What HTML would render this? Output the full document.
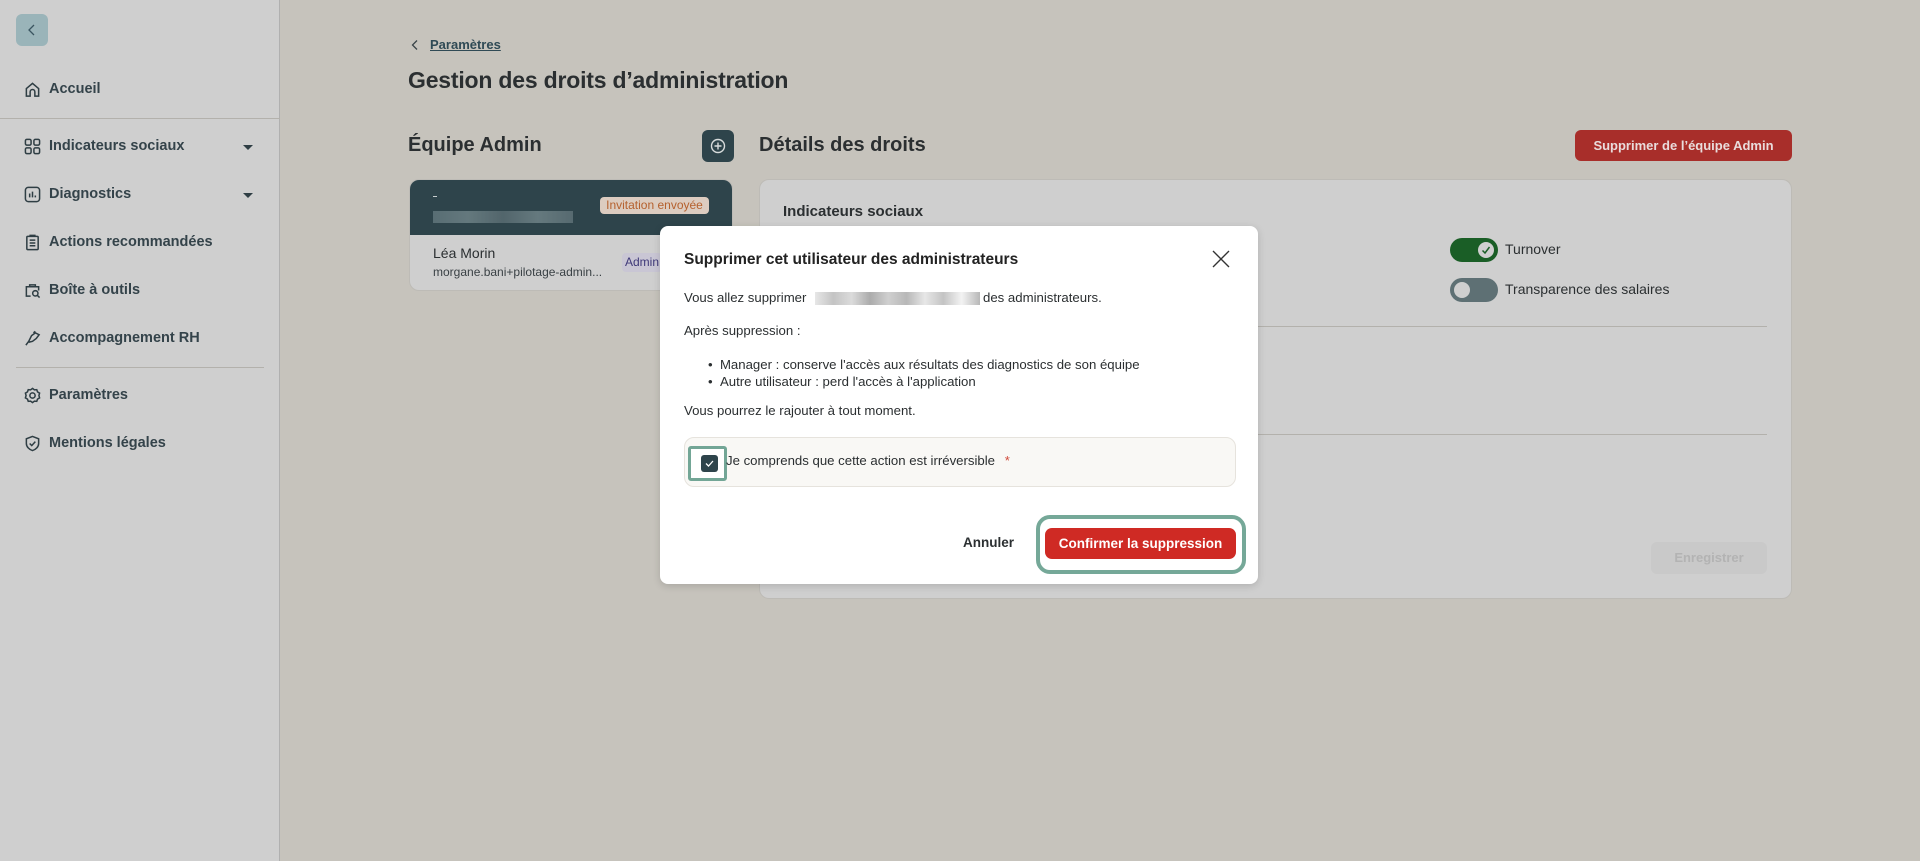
<!DOCTYPE html>
<html><head><meta charset="utf-8"><style>
*{box-sizing:border-box;margin:0;padding:0}
body{width:1920px;height:861px;overflow:hidden;background:#c6c3bc;font-family:"Liberation Sans",sans-serif;color:#2b2f31;position:relative}
.abs{position:absolute}
.sb{left:0;top:0;width:280px;height:861px;background:#cfcfcf;border-right:1px solid #b0b0b0}
.nav{position:absolute;left:24px;display:flex;align-items:center;font-size:14.5px;font-weight:bold;color:#34434a;height:20px}
.nav svg{width:17px;height:17px;margin-right:8px;fill:none;stroke:#2f3e44;stroke-width:1.6}
.caret{position:absolute;left:243px;width:0;height:0;border-left:5px solid transparent;border-right:5px solid transparent;border-top:5px solid #2f3e44}
.hr{position:absolute;height:1px;background:#b3b1ac}
.tg{position:absolute;width:48px;height:24px;border-radius:12px}
.knob{position:absolute;top:4px;width:16px;height:16px;border-radius:50%;background:#cfcfcf}
.mt{font-size:13.2px;color:#2b2f31}
</style></head><body>
<div class="abs sb"></div>
<div class="abs" style="left:16px;top:14px;width:32px;height:32px;border-radius:6px;background:#9ab4b9"></div>
<svg class="abs" style="left:26px;top:23px" width="12" height="14" viewBox="0 0 12 14"><path d="M8 2 L3 7 L8 12" fill="none" stroke="#3a5560" stroke-width="1.3"/></svg>
<div class="nav" style="top:79px"><svg viewBox="0 0 18 18"><path d="M2.5 16V8L9 2.5 15.5 8V16H11.5V11.5A2.5 2.5 0 0 0 6.5 11.5V16Z"/></svg>Accueil</div>
<div class="hr" style="left:0;top:118px;width:280px"></div>
<div class="nav" style="top:136px"><svg viewBox="0 0 18 18"><rect x="1.5" y="1.5" width="6" height="6" rx="1.5"/><rect x="10.5" y="1.5" width="6" height="6" rx="1.5"/><rect x="1.5" y="10.5" width="6" height="6" rx="1.5"/><rect x="10.5" y="10.5" width="6" height="6" rx="1.5"/></svg>Indicateurs sociaux</div>
<div class="caret" style="top:145px"></div>
<div class="nav" style="top:184px"><svg viewBox="0 0 18 18"><rect x="1.5" y="1.5" width="15" height="15" rx="3"/><path d="M6 12V8M9 12V6M12 12V10"/></svg>Diagnostics</div>
<div class="caret" style="top:193px"></div>
<div class="nav" style="top:232px"><svg viewBox="0 0 18 18"><rect x="3" y="2.5" width="12" height="14" rx="1"/><path d="M6.5 2.5V1.5H11.5V2.5M6 6.5H12M6 9.5H12M6 12.5H12"/></svg>Actions recommandées</div>
<div class="nav" style="top:280px"><svg viewBox="0 0 18 18"><path d="M7 15H2.5V5H15.5V9M6 5V3H12V5"/><circle cx="12" cy="12" r="2.8"/><path d="M14 14L16.5 16.5"/></svg>Boîte à outils</div>
<div class="nav" style="top:328px"><svg viewBox="0 0 18 18"><path d="M2 16L5 12 8 6 12 3 16 5 13 9 9 12 5 13M10 3L12 1.5"/></svg>Accompagnement RH</div>
<div class="hr" style="left:16px;top:367px;width:248px"></div>
<div class="nav" style="top:385px"><svg viewBox="0 0 18 18"><circle cx="9" cy="9" r="2.8"/><path d="M9 1.5L11 3 13.5 2.8 14.3 5.2 16.5 6.5 15.8 9 16.5 11.5 14.3 12.8 13.5 15.2 11 15 9 16.5 7 15 4.5 15.2 3.7 12.8 1.5 11.5 2.2 9 1.5 6.5 3.7 5.2 4.5 2.8 7 3Z"/></svg>Paramètres</div>
<div class="nav" style="top:433px"><svg viewBox="0 0 18 18"><path d="M9 1.5L15.5 4V9C15.5 12.5 12.5 15.5 9 16.5 5.5 15.5 2.5 12.5 2.5 9V4Z"/><path d="M6 9L8.2 11.2 12 7"/></svg>Mentions légales</div>

<!-- main -->
<svg class="abs" style="left:410px;top:39px" width="10" height="12" viewBox="0 0 10 12"><path d="M7 1.5L2.5 6 7 10.5" fill="none" stroke="#3a4448" stroke-width="1.3"/></svg>
<div class="abs" style="left:430px;top:37px;font-size:13px;font-weight:bold;color:#2f4a55;text-decoration:underline">Paramètres</div>
<div class="abs" style="left:408px;top:67px;font-size:23px;font-weight:bold;color:#2b2f31;letter-spacing:-0.2px">Gestion des droits d’administration</div>
<div class="abs" style="left:408px;top:134px;font-size:20px;font-weight:bold">Équipe Admin</div>
<div class="abs" style="left:702px;top:130px;width:32px;height:32px;border-radius:6px;background:#2e444b"></div>
<svg class="abs" style="left:708px;top:136px" width="20" height="20" viewBox="0 0 20 20"><circle cx="10" cy="10" r="6.5" fill="none" stroke="#d8dcdc" stroke-width="1.4"/><path d="M10 6.5V13.5M6.5 10H13.5" stroke="#d8dcdc" stroke-width="1.4"/></svg>
<div class="abs" style="left:409px;top:179px;width:324px;height:112px;border-radius:10px;background:#cfcfcf;border:1px solid #bdbbb6;overflow:hidden">
 <div style="height:55px;background:#2e444b"></div>
</div>
<div class="abs" style="left:433px;top:196px;width:4px;height:1px;background:#c8cfd0"></div>
<div class="abs" style="left:433px;top:211px;width:140px;height:12px;background:linear-gradient(90deg,#5d7278,#6a7e83,#56696f,#6b7f84,#5b6e74);opacity:.9"></div>
<div class="abs" style="left:600px;top:197px;width:109px;height:17px;border-radius:4px;background:#dcccc0;color:#b5612e;font-size:12px;line-height:17px;text-align:center">Invitation envoyée</div>
<div class="abs" style="left:433px;top:245px;font-size:14px;color:#2b2f31">Léa Morin</div>
<div class="abs" style="left:433px;top:265px;font-size:12px;color:#3a4145">morgane.bani+pilotage-admin...</div>
<div class="abs" style="left:622px;top:253px;width:40px;height:19px;border-radius:4px;background:#c9c6d4;color:#3e3878;font-size:12px;line-height:19px;padding-left:3px">Admin</div>

<div class="abs" style="left:759px;top:134px;font-size:20px;font-weight:bold">Détails des droits</div>
<div class="abs" style="left:1575px;top:130px;width:217px;height:31px;border-radius:6px;background:#a82e2a;color:#e9dcdc;font-size:13px;font-weight:bold;line-height:31px;text-align:center">Supprimer de l’équipe Admin</div>
<div class="abs" style="left:759px;top:179px;width:1033px;height:420px;border-radius:10px;background:#cfcfcf;border:1px solid #bdbbb6"></div>
<div class="abs" style="left:783px;top:203px;font-size:15px;font-weight:bold;color:#2b2f31">Indicateurs sociaux</div>
<div class="tg" style="left:1450px;top:238px;background:#1a5e26"><div class="knob" style="left:28px"></div></div>
<svg class="abs" style="left:1480px;top:244px" width="12" height="12" viewBox="0 0 12 12"><path d="M2.5 6.5L5 9 9.5 3" fill="none" stroke="#1a5e26" stroke-width="1.5"/></svg>
<div class="abs" style="left:1505px;top:241px;font-size:14px">Turnover</div>
<div class="tg" style="left:1450px;top:278px;background:#5e7074"><div class="knob" style="left:4px"></div></div>
<div class="abs" style="left:1505px;top:281px;font-size:14px">Transparence des salaires</div>
<div class="hr" style="left:783px;top:326px;width:984px"></div>
<div class="hr" style="left:783px;top:434px;width:984px"></div>
<div class="abs" style="left:1651px;top:542px;width:116px;height:32px;border-radius:6px;background:#c9c9c9;color:#b3b3b3;font-size:13px;font-weight:bold;line-height:32px;text-align:center">Enregistrer</div>

<!-- modal -->
<div class="abs" style="left:660px;top:226px;width:598px;height:358px;border-radius:8px;background:#fff;box-shadow:0 2px 8px rgba(0,0,0,.15)"></div>
<div class="abs" style="left:684px;top:251px;font-size:15.5px;font-weight:bold;color:#222">Supprimer cet utilisateur des administrateurs</div>
<svg class="abs" style="left:1211px;top:249px" width="20" height="20" viewBox="0 0 20 20"><path d="M2 2L18 18M18 2L2 18" stroke="#333" stroke-width="1.4"/></svg>
<div class="abs mt" style="left:684px;top:290px">Vous allez supprimer</div>
<div class="abs" style="left:815px;top:292px;width:165px;height:13px;background:linear-gradient(90deg,#ddd,#aaa,#ccc,#888,#bbb,#999,#ddd,#aaa,#eee,#999);opacity:.7"></div>
<div class="abs mt" style="left:983px;top:290px">des administrateurs.</div>
<div class="abs mt" style="left:684px;top:323px">Après suppression :</div>
<div class="abs mt" style="left:708px;top:356px;line-height:17px">• &nbsp;Manager : conserve l'accès aux résultats des diagnostics de son équipe<br>• &nbsp;Autre utilisateur : perd l'accès à l'application</div>
<div class="abs mt" style="left:684px;top:403px">Vous pourrez le rajouter à tout moment.</div>
<div class="abs" style="left:684px;top:437px;width:552px;height:50px;border-radius:10px;background:#f9f8f5;border:1px solid #e6e3dd"></div>
<div class="abs" style="left:688px;top:446px;width:39px;height:35px;border:3px solid #73a696;border-radius:3px;background:#fff"></div>
<div class="abs" style="left:701px;top:455px;width:17px;height:17px;border-radius:3px;background:#2e444b"></div>
<svg class="abs" style="left:703px;top:457px" width="13" height="13" viewBox="0 0 13 13"><path d="M3 6.5L5.5 9 10 4" fill="none" stroke="#fff" stroke-width="1.3"/></svg>
<div class="abs mt" style="left:726px;top:453px">Je comprends que cette action est irréversible <span style="color:#d04a3a;margin-left:6px">*</span></div>
<div class="abs" style="left:963px;top:535px;font-size:13.5px;font-weight:bold;color:#2b2f31">Annuler</div>
<div class="abs" style="left:1036px;top:515px;width:210px;height:59px;border:4px solid #75a898;border-radius:14px;background:#fff"></div>
<div class="abs" style="left:1045px;top:528px;width:191px;height:31px;border-radius:7px;background:#cf2a24;color:#fff;font-size:13.5px;font-weight:bold;line-height:31px;text-align:center">Confirmer la suppression</div>
</body></html>
